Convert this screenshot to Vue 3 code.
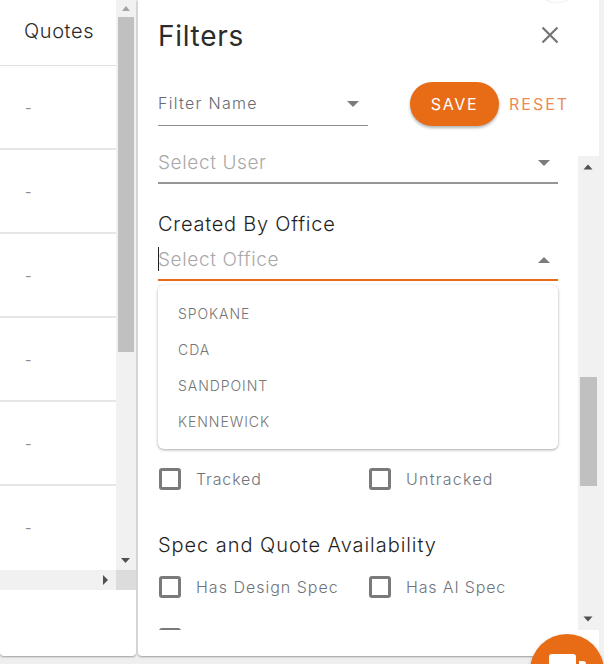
<script setup>
const rows = [1, 2, 3, 4, 5, 6]
const offices = ['SPOKANE', 'CDA', 'SANDPOINT', 'KENNEWICK']
</script>

<template>
  <div class="page">
    <section class="card left">
      <div class="table-grid">
        <div class="table">
          <div class="th">Quotes</div>
          <div v-for="r in rows" :key="r" class="td">-</div>
        </div>
        <div class="vbar">
          <svg class="arrow" width="20" height="17" viewBox="0 0 20 17"><path d="M6 11h8l-4-5z" fill="#a3a3a3" /></svg>
          <div class="vtrack"><div class="thumb thumb-left"></div></div>
          <svg class="arrow" width="20" height="17" viewBox="0 0 20 17"><path d="M5 5h9l-4.500 5z" fill="#505050" /></svg>
        </div>
        <div class="hbar">
          <svg width="10" height="20" viewBox="0 0 10 20"><path d="M3 5v10l5-5z" fill="#505050" /></svg>
        </div>
        <div class="corner"></div>
      </div>
    </section>

    <section class="card right">
      <header class="head">
        <h1>Filters</h1>
        <svg class="close" width="18" height="18" viewBox="0 0 18 18"><path d="M1.500 1.500l15 15M16.500 1.500l-15 15" stroke="#757575" stroke-width="2.200" fill="none" /></svg>
      </header>
      <div class="actions">
        <div class="select small">
          <span class="name">Filter Name</span>
          <svg class="caret" width="14" height="8" viewBox="0 0 14 8"><path d="M1 1h12L7 7z" fill="#7c7c7c" /></svg>
        </div>
        <button class="save">SAVE</button>
        <button class="reset">RESET</button>
      </div>
      <div class="scroll">
        <div class="content">
          <div class="select user">
            <span class="ph">Select User</span>
            <svg class="caret" width="14" height="8" viewBox="0 0 14 8"><path d="M1 1h12L7 7z" fill="#7c7c7c" /></svg>
          </div>
          <h2 class="created">Created By Office</h2>
          <div class="select office">
            <i class="cursor"></i>
            <span class="ph">Select Office</span>
            <svg class="caret" width="14" height="8" viewBox="0 0 14 8"><path d="M1 7h12L7 1z" fill="#7c7c7c" /></svg>
          </div>
          <ul class="menu">
            <li v-for="o in offices" :key="o">{{ o }}</li>
          </ul>
          <div class="checks track">
            <label><i class="box"></i><span>Tracked</span></label>
            <label><i class="box"></i><span class="wide">Untracked</span></label>
          </div>
          <h2 class="spec">Spec and Quote Availability</h2>
          <div class="checks">
            <label><i class="box"></i><span class="design">Has Design Spec</span></label>
            <label><i class="box"></i><span>Has AI Spec</span></label>
          </div>
          <div class="checks cut">
            <label><i class="box"></i></label>
          </div>
        </div>
        <div class="vbar inner">
          <svg class="arrow" width="21" height="22" viewBox="0 0 21 22"><path d="M5.500 13.500h9l-4.500-5z" fill="#505050" /></svg>
          <div class="vtrack"><div class="thumb thumb-right"></div></div>
          <svg class="arrow" width="21" height="22" viewBox="0 0 21 22"><path d="M5.500 8.500h9l-4.500 5z" fill="#505050" /></svg>
        </div>
      </div>
    </section>
    <div class="outer-bar"></div>

    <div class="fab-top"></div>
    <div class="fab">
      <svg width="40" height="30" viewBox="0 0 40 30"><path d="M2 3q0-3 3-3h21q3 0 3 3v27H2zM32 7h4q3 0 3 3v20h-7z" fill="#fff" /></svg>
    </div>
  </div>
</template>

<style>
html, body { margin: 0; background: #efefef; }
</style>

<style scoped>
.page {
  position: relative;
  width: 604px;
  height: 664px;
  display: flex;
  overflow: hidden;
  background: #efefef;
  font-family: Inter, "Liberation Sans", sans-serif;
  color: #2f2f2f;
}
.card {
  height: 656px;
  background: #fff;
  box-shadow: 0 1px 2px rgba(0, 0, 0, 0.35);
  border-radius: 0 0 4px 4px;
}
.left { width: 136px; flex: none; margin-right: 2px; }
.right { width: 461px; flex: none; }
.outer-bar { width: 5px; height: 664px; background: #f1f1f1; }

.table-grid {
  display: grid;
  grid-template-columns: 116px 20px;
  grid-template-rows: 570px 20px;
}
.th {
  height: 66px;
  box-sizing: border-box;
  padding: 20px 0 0 24px;
  font-size: 20px;
  font-weight: 300;
  line-height: 22px;
  border-bottom: 1px solid #e2e2e2;
  color: #2a2a2a;
  letter-spacing: 0.6px;
}
.td {
  height: 84px;
  box-sizing: border-box;
  padding: 34px 0 0 25px;
  font-size: 14px;
  line-height: 16px;
  color: #8a8a8a;
  border-bottom: 2px solid #e6e6e6;
}
.td:last-child { height: 84px; border-bottom: 0; }
.vbar {
  display: flex;
  flex-direction: column;
  background: #f1f1f1;
}
.arrow { display: block; flex: none; }
.vtrack { flex: 1; min-height: 0; padding: 0 2px; }
.thumb { background: #c0c0c0; }
.thumb-left { height: 335px; }
.hbar {
  height: 20px;
  background: #f1f1f1;
  display: flex;
  justify-content: flex-end;
}
.hbar svg { display: block; margin-right: 6px; }
.corner { background: #dcdcdc; }

.head {
  height: 70px;
  padding: 0 40px 0 20px;
  display: flex;
  align-items: center;
  justify-content: space-between;
}
h1 {
  margin: 0;
  padding-top: 1px;
  font-size: 28px;
  font-weight: 400;
  color: #2b2b2b;
  letter-spacing: 0.7px;
}
.close { display: block; }
.actions {
  height: 44px;
  margin-top: 12px;
  padding-left: 20px;
  display: flex;
  align-items: flex-start;
}
.select {
  box-sizing: border-box;
  display: flex;
  align-items: center;
  justify-content: space-between;
  position: relative;
}
.select.small {
  width: 210px;
  height: 44px;
  border-bottom: 1px solid #8e8e8e;
  padding: 0 8px 0 0;
}
.name {
  margin-top: -2px;
  font-size: 16px;
  font-weight: 300;
  color: #666b74;
  letter-spacing: 1.300px;
}
.save {
  margin-left: 42px;
  width: 89px;
  height: 44px;
  padding: 0;
  border: 0;
  border-radius: 22px;
  background: #e76c15;
  color: #fff;
  font: 400 16px Inter, "Liberation Sans", sans-serif;
  letter-spacing: 1.600px;
  box-shadow: 0 2px 3px rgba(0, 0, 0, 0.3);
}
.reset {
  margin-left: 10px;
  padding: 0;
  height: 44px;
  border: 0;
  background: none;
  color: #ec8a55;
  font: 400 16px Inter, "Liberation Sans", sans-serif;
  letter-spacing: 2px;
}
.scroll {
  margin-top: 26px;
  height: 478px;
  display: flex;
  overflow: hidden;
}
.content {
  width: 400px;
  margin-left: 20px;
  padding-top: 4px;
  flex: none;
}
.inner { width: 21px; margin-left: 20px; margin-top: 4px; flex: none; }
.inner .arrow { height: 22px; }
.thumb-right { height: 109px; margin-top: 199px; }

.select.user {
  height: 28px;
  border-bottom: 2px solid #969696;
  padding: 0 7px 12px 0;
}
.ph {
  font-size: 19px;
  line-height: 14px;
  font-weight: 300;
  color: #a9a9a9;
  letter-spacing: 0.620px;
}
h2 {
  margin: 0;
  padding-top: 1px;
  font-size: 20px;
  font-weight: 300;
  line-height: 24px;
  color: #1f1f1f;
  letter-spacing: 0.750px;
}
.created { margin-top: 27px; }
.select.office {
  height: 40px;
  margin-top: 5px;
  border-bottom: 2px solid #e76c15;
  padding: 0 7px 0 0;
}
.cursor {
  position: absolute;
  left: 0;
  top: 6px;
  width: 1px;
  height: 24px;
  background: #222;
}
.menu {
  list-style: none;
  margin: 4px 0 0;
  padding: 10px 0;
  height: 164px;
  box-sizing: border-box;
  background: #fff;
  border-radius: 6px;
  box-shadow: 0 1px 3px rgba(0, 0, 0, 0.35);
}
.menu li {
  height: 36px;
  line-height: 37px;
  padding-left: 20px;
  font-size: 14px;
  font-weight: 300;
  color: #757575;
  letter-spacing: 0.950px;
}
.checks {
  display: grid;
  grid-template-columns: 210px 190px;
}
.checks label {
  display: flex;
  align-items: center;
  height: 24px;
  font-size: 16px;
  font-weight: 300;
  color: #6f747c;
  letter-spacing: 0.850px;
}
.checks .wide { letter-spacing: 1.250px; }
.checks .design { letter-spacing: 1px; }
.box {
  box-sizing: border-box;
  width: 22px;
  height: 22px;
  margin: 0 15px 0 1px;
  border: 3px solid #7a7a7a;
  border-radius: 3px;
  flex: none;
}
.track { margin-top: 18px; }
.spec { margin-top: 41px; letter-spacing: 0.950px; }
.spec + .checks { margin-top: 18px; }
.cut { margin-top: 28px; }

.fab {
  position: absolute;
  left: 530px;
  top: 634px;
  width: 74px;
  height: 74px;
  border-radius: 50%;
  background: #e76c15;
  box-shadow: 0 2px 4px rgba(0, 0, 0, 0.2);
  display: flex;
  justify-content: center;
  padding-top: 20px;
  box-sizing: border-box;
}
.fab svg { display: block; }
.fab-top {
  position: absolute;
  left: 529px;
  top: -72px;
  width: 56px;
  height: 74px;
  border-radius: 50%;
  background: #fff;
  box-shadow: 0 1px 2px rgba(0, 0, 0, 0.07);
}
</style>
